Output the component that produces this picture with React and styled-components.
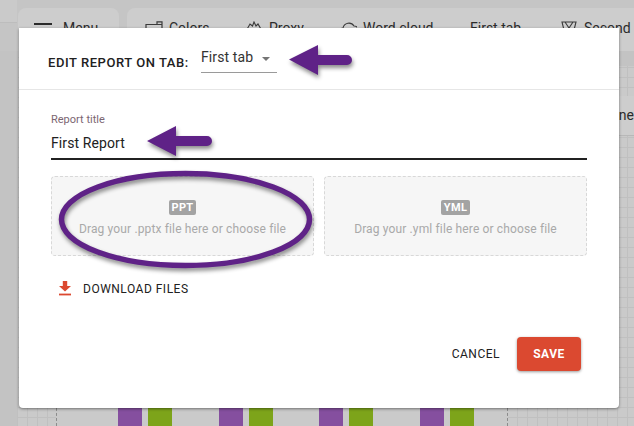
import { createGlobalStyle } from 'styled-components';
import styled from 'styled-components';

const GlobalStyle = createGlobalStyle`
  html, body {
    margin: 0;
    padding: 0;
    background: #cacaca;
  }
  body {
    font-family: Roboto, "Liberation Sans", sans-serif;
    overflow: hidden;
  }
`;

const bars = [118, 219, 319, 420];

const App = () => {
  return (
    <>
      <GlobalStyle />
      <Page>
        <TopStrip>
          <SideStub />
          <MenuCard>
            <HamburgerIcon />
            <TabLabel>Menu</TabLabel>
          </MenuCard>
          <TabsCard>
            <Tab $width={100}>
              <ColorsIcon />
              <TabLabel>Colors</TabLabel>
            </Tab>
            <Tab $width={94}>
              <ProxyIcon />
              <TabLabel>Proxy</TabLabel>
            </Tab>
            <Tab $width={131}>
              <CloudIcon />
              <TabLabel>Word cloud</TabLabel>
            </Tab>
            <Tab $width={90}>
              <TabLabel>First tab</TabLabel>
            </Tab>
            <Tab $width={100}>
              <SecondIcon />
              <TabLabel>Second</TabLabel>
            </Tab>
          </TabsCard>
        </TopStrip>

        <Canvas>
          <LeftRail />
          <GridZone $width={39} />
          <BarZone>
            {bars.map((x) => (
              <BarPair key={x} $x={x}>
                <Bar $color="#854f9f" />
                <Bar $color="#7da41a" />
              </BarPair>
            ))}
          </BarZone>
          <GridZone $fill $offset={9}>
            <DarkBand />
            <LightBand>ne</LightBand>
          </GridZone>
        </Canvas>

        {/* dialog over the page */}
        <Dialog>
          <DialogHeader>
            <HeaderTitle>EDIT REPORT ON TAB:</HeaderTitle>
            <TabSelect>
              <span>First tab</span>
              <Caret />
            </TabSelect>
          </DialogHeader>

          <DialogBody>
            <TitleField>
              <FieldLabel>Report title</FieldLabel>
              <FieldValue>First Report</FieldValue>
            </TitleField>

            <DropRow>
              <DropZone>
                <Badge>PPT</Badge>
                <DropText>Drag your .pptx file here or choose file</DropText>
              </DropZone>
              <DropZone>
                <Badge>YML</Badge>
                <DropText>Drag your .yml file here or choose file</DropText>
              </DropZone>
            </DropRow>

            <DownloadRow>
              <svg width="12" height="15" viewBox="0 0 12 15" fill="#db4930">
                <path d="M3.8 0h4.4v5H12L6 10.5 0 5h3.8z" />
                <rect y="12.6" width="12" height="1.8" />
              </svg>
              <DownloadText>DOWNLOAD FILES</DownloadText>
            </DownloadRow>
          </DialogBody>

          <DialogFooter>
            <CancelButton>CANCEL</CancelButton>
            <SaveButton>SAVE</SaveButton>
          </DialogFooter>
        </Dialog>

        {/* purple annotations drawn on the screenshot */}
        <Annotation width="634" height="426" viewBox="0 0 634 426" fill="none">
          <ellipse cx="185.5" cy="219.5" rx="124" ry="46" stroke="#5f2287" strokeWidth="5.5" />
          <path d="M289 59.5 318 45v10h29a5 5 0 0 1 0 10h-29v10z" fill="#5f2287" />
          <path d="M147 141 176 126v10h31a5 5 0 0 1 0 10h-31v10z" fill="#5f2287" />
        </Annotation>
      </Page>
    </>
  );
};

const HamburgerIcon = () => (
  <svg width="18" height="14" viewBox="0 0 18 14" fill="#2b2b2b">
    <rect y="0" width="18" height="2" />
    <rect y="6" width="18" height="2" />
    <rect y="12" width="18" height="2" />
  </svg>
);

const ColorsIcon = () => (
  <svg width="18" height="18" viewBox="0 0 18 18" fill="none" stroke="#3a3a3a" strokeWidth="1.2">
    <path d="M1 3.5h11V.8h5v14H1zM12 3.5h5" />
  </svg>
);

const ProxyIcon = () => (
  <svg width="18" height="18" viewBox="0 0 18 18" fill="none" stroke="#3a3a3a" strokeWidth="1.1">
    <path d="M1 10 5 3l2.5 2L9 1l2 4 2-2 4 7v6H1z" />
  </svg>
);

const CloudIcon = () => (
  <svg width="18" height="18" viewBox="0 0 18 18" fill="none" stroke="#3a3a3a" strokeWidth="1.1">
    <path d="M1 10a3 3 0 0 1 3-3 6 6 0 0 1 11-2 5 5 0 0 1 0 10H4a3 3 0 0 1-3-5z" />
  </svg>
);

const SecondIcon = () => (
  <svg width="18" height="18" viewBox="0 0 18 18" fill="none" stroke="#3a3a3a" strokeWidth="1.1">
    <path d="M2 1h14l-2 8 2 7H2l2-7zM5 1l4 6 4-6" />
  </svg>
);

const Page = styled.div`
  position: relative;
  width: 634px;
  height: 426px;
  overflow: hidden;
  background: #cacaca;
`;

const TopStrip = styled.div`
  display: flex;
  height: 51px;
  background: #c5c5c5;
`;

const SideStub = styled.div`
  width: 17px;
  height: 22px;
  flex-shrink: 0;
  background: #cacaca;
  border-bottom: 1px solid #bdbdbd;
`;

const MenuCard = styled.div`
  width: 101px;
  margin: 8px 0 0 1px;
  flex-shrink: 0;
  display: flex;
  align-items: flex-start;
  gap: 11px;
  padding: 15px 0 0 16px;
  box-sizing: border-box;
  background: #cdcdcd;
  border-radius: 8px 8px 0 0;

  span {
    margin-top: -2px;
  }
`;

const TabsCard = styled.div`
  flex: 1;
  margin: 8px 0 0 8px;
  display: flex;
  padding: 13px 0 0 18px;
  background: #cdcdcd;
  border-radius: 8px 0 0 0;
`;

const Tab = styled.div`
  width: ${(p) => p.$width}px;
  flex-shrink: 0;
  display: flex;
  align-items: flex-start;
  gap: 6px;
`;

const TabLabel = styled.span`
  font-size: 14px;
  line-height: 14px;
  color: #2b2b2b;
  white-space: nowrap;
`;

const Canvas = styled.div`
  display: flex;
  height: 375px;
`;

const LeftRail = styled.div`
  width: 17px;
  flex-shrink: 0;
  background: #c3c3c3;
`;

const GridZone = styled.div`
  ${(p) => (p.$fill ? 'flex: 1;' : `width: ${p.$width}px;`)}
  background-color: #cacaca;
  background-image:
    linear-gradient(to right, #c0c0c0 1px, transparent 1px),
    linear-gradient(to bottom, #c0c0c0 1px, transparent 1px);
  background-size: 10px 10px;
  background-position: ${(p) => p.$offset || 0}px 6px;
`;

const DarkBand = styled.div`
  height: 15px;
  background: #c3c3c3;
`;

const LightBand = styled.div`
  height: 40px;
  margin-top: 30px;
  box-sizing: border-box;
  padding: 11px 0 0 111px;
  background: #cdcdcd;
  border-bottom: 1px solid #b8b8b8;
  font-size: 14px;
  line-height: 16px;
  color: #2b2b2b;
`;

const BarZone = styled.div`
  position: relative;
  width: 452px;
  flex-shrink: 0;
  box-sizing: border-box;
  background: #cacaca;
  border-left: 1px dashed #8c8c8c;
  border-right: 1px dashed #8c8c8c;
`;

const BarPair = styled.div`
  position: absolute;
  left: ${(p) => p.$x - 57}px;
  bottom: 0;
  height: 100%;
  display: flex;
  gap: 6px;
`;

const Bar = styled.div`
  width: 24px;
  background: ${(p) => p.$color};
`;

const Dialog = styled.div`
  position: absolute;
  left: 19px;
  top: 28px;
  width: 600px;
  height: 380px;
  display: flex;
  flex-direction: column;
  background: #fff;
  border-radius: 0 0 4px 4px;
  box-shadow: 0 1px 3px rgba(0, 0, 0, 0.45);
`;

const DialogHeader = styled.div`
  height: 62px;
  box-sizing: border-box;
  padding: 17px 0 0 29px;
  display: flex;
  align-items: flex-start;
  border-bottom: 1px solid #e6e6e6;
`;

const HeaderTitle = styled.div`
  margin-top: 10px;
  width: 153px;
  font-size: 13px;
  font-weight: 500;
  line-height: 16px;
  letter-spacing: 0.55px;
  color: #212121;
  white-space: nowrap;
`;

const TabSelect = styled.div`
  width: 76px;
  height: 28px;
  box-sizing: border-box;
  display: flex;
  justify-content: space-between;
  align-items: flex-start;
  padding: 4px 7px 0 0;
  font-size: 14px;
  line-height: 17px;
  letter-spacing: 0.1px;
  color: #333;
  border-bottom: 1px solid #9a9a9a;
`;

const Caret = styled.span`
  margin-top: 8px;
  border-left: 4px solid transparent;
  border-right: 4px solid transparent;
  border-top: 4px solid #757575;
`;

const DialogBody = styled.div`
  flex: 1;
  padding: 23px 32px 0;
`;

const TitleField = styled.div`
  height: 45px;
  border-bottom: 2px solid #212121;
`;

const FieldLabel = styled.div`
  font-size: 11px;
  line-height: 13px;
  color: #7b6672;
`;

const FieldValue = styled.div`
  margin-top: 7px;
  font-size: 14px;
  line-height: 20px;
  letter-spacing: 0.1px;
  color: #212121;
`;

const DropRow = styled.div`
  display: grid;
  grid-template-columns: 1fr 1fr;
  gap: 10px;
  margin-top: 16px;
`;

const DropZone = styled.div`
  height: 80px;
  box-sizing: border-box;
  display: flex;
  flex-direction: column;
  align-items: center;
  padding-top: 23px;
  gap: 6px;
  background: #f6f6f6;
  border: 1px dashed #d8d8d8;
  border-radius: 4px;
`;

const Badge = styled.span`
  height: 15px;
  padding: 0 3px;
  border-radius: 2px;
  background: #a3a3a3;
  color: #fff;
  font-size: 11px;
  font-weight: 700;
  line-height: 15px;
  letter-spacing: 0.3px;
`;

const DropText = styled.span`
  font-size: 12px;
  line-height: 16px;
  letter-spacing: 0.14px;
  color: #a9a9a9;
  white-space: nowrap;
`;

const DownloadRow = styled.div`
  display: flex;
  align-items: center;
  gap: 12px;
  margin-top: 25px;
  padding-left: 8px;
`;

const DownloadText = styled.span`
  font-size: 12px;
  letter-spacing: 0.5px;
  color: #212121;
`;

const DialogFooter = styled.div`
  display: flex;
  justify-content: flex-end;
  align-items: center;
  gap: 17px;
  padding: 0 38px 37px 0;
`;

const CancelButton = styled.span`
  font-size: 12px;
  letter-spacing: 0.5px;
  color: #212121;
`;

const SaveButton = styled.span`
  width: 64px;
  height: 34px;
  display: flex;
  align-items: center;
  justify-content: center;
  border-radius: 4px;
  background: #db4930;
  color: #fff;
  font-size: 12px;
  font-weight: 700;
  letter-spacing: 0.5px;
  box-shadow: 0 1px 3px rgba(0, 0, 0, 0.4);
`;

const Annotation = styled.svg`
  position: absolute;
  inset: 0;
  pointer-events: none;
  filter: drop-shadow(1px 3px 2px rgba(0, 0, 0, 0.45));
`;

export default App;
